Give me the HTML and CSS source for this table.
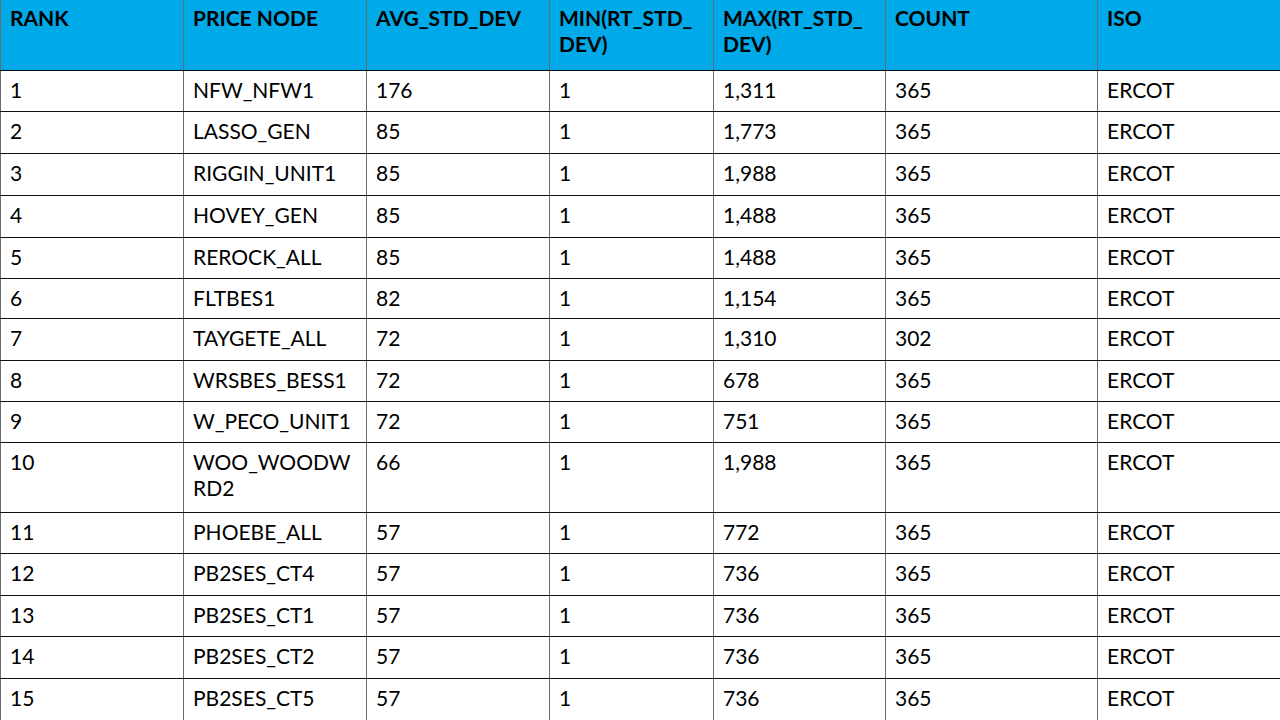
FILE: index.html
```html
<!DOCTYPE html>
<html>
<head>
<meta charset="utf-8">
<link rel="stylesheet" href="styles.css">
</head>
<body>
<table class="grid">
  <colgroup>
    <col class="c1"><col class="c2"><col class="c3"><col class="c4"><col class="c5"><col class="c6"><col class="c7">
  </colgroup>
  <thead>
    <tr class="head">
      <th>RANK</th><th>PRICE NODE</th><th>AVG_STD_DEV</th><th>MIN(RT_STD_<br>DEV)</th><th>MAX(RT_STD_<br>DEV)</th><th>COUNT</th><th>ISO</th>
    </tr>
  </thead>
  <tbody>
    <tr class="r41"><td>1</td><td>NFW_NFW1</td><td>176</td><td>1</td><td>1,311</td><td>365</td><td>ERCOT</td></tr>
    <tr class="r42"><td>2</td><td>LASSO_GEN</td><td>85</td><td>1</td><td>1,773</td><td>365</td><td>ERCOT</td></tr>
    <tr class="r42"><td>3</td><td>RIGGIN_UNIT1</td><td>85</td><td>1</td><td>1,988</td><td>365</td><td>ERCOT</td></tr>
    <tr class="r42"><td>4</td><td>HOVEY_GEN</td><td>85</td><td>1</td><td>1,488</td><td>365</td><td>ERCOT</td></tr>
    <tr class="r41"><td>5</td><td>REROCK_ALL</td><td>85</td><td>1</td><td>1,488</td><td>365</td><td>ERCOT</td></tr>
    <tr class="r40"><td>6</td><td>FLTBES1</td><td>82</td><td>1</td><td>1,154</td><td>365</td><td>ERCOT</td></tr>
    <tr class="r42"><td>7</td><td>TAYGETE_ALL</td><td>72</td><td>1</td><td>1,310</td><td>302</td><td>ERCOT</td></tr>
    <tr class="r41"><td>8</td><td>WRSBES_BESS1</td><td>72</td><td>1</td><td>678</td><td>365</td><td>ERCOT</td></tr>
    <tr class="r41"><td>9</td><td>W_PECO_UNIT1</td><td>72</td><td>1</td><td>751</td><td>365</td><td>ERCOT</td></tr>
    <tr class="r70"><td>10</td><td>WOO_WOODW<br>RD2</td><td>66</td><td>1</td><td>1,988</td><td>365</td><td>ERCOT</td></tr>
    <tr class="r41"><td>11</td><td>PHOEBE_ALL</td><td>57</td><td>1</td><td>772</td><td>365</td><td>ERCOT</td></tr>
    <tr class="r42"><td>12</td><td>PB2SES_CT4</td><td>57</td><td>1</td><td>736</td><td>365</td><td>ERCOT</td></tr>
    <tr class="r41"><td>13</td><td>PB2SES_CT1</td><td>57</td><td>1</td><td>736</td><td>365</td><td>ERCOT</td></tr>
    <tr class="r42"><td>14</td><td>PB2SES_CT2</td><td>57</td><td>1</td><td>736</td><td>365</td><td>ERCOT</td></tr>
    <tr class="r42"><td>15</td><td>PB2SES_CT5</td><td>57</td><td>1</td><td>736</td><td>365</td><td>ERCOT</td></tr>
  </tbody>
</table>
</body>
</html>
```
FILE: styles.css
```css
html, body {
  margin: 0;
  padding: 0;
  background: #ffffff;
  width: 1280px;
  height: 720px;
  overflow: hidden;
}

.grid {
  border-collapse: collapse;
  table-layout: fixed;
  width: 1280px;
  font-family: Lato, "Liberation Sans", sans-serif;
  font-size: 21px;
  line-height: 26px;
  color: #000;
}

.c1 { width: 183px; }
.c2 { width: 183px; }
.c3 { width: 183px; }
.c4 { width: 164px; }
.c5 { width: 172px; }
.c6 { width: 212px; }
.c7 { width: 183px; }

.grid th,
.grid td {
  text-align: left;
  vertical-align: top;
  padding: 6px 9px 0 9px;
  border-left: 1px solid #6b6b6b;
  border-right: 1px solid #6b6b6b;
  border-bottom: 1px solid #111;
  box-sizing: border-box;
  overflow: hidden;
}

.grid th {
  background: #00a9e7;
  font-weight: 700;
  padding-top: 5px;
}

.head { height: 70px; }
.r40 { height: 40px; }
.r41 { height: 41px; }
.r42 { height: 42px; }
.r70 { height: 70px; }
```
